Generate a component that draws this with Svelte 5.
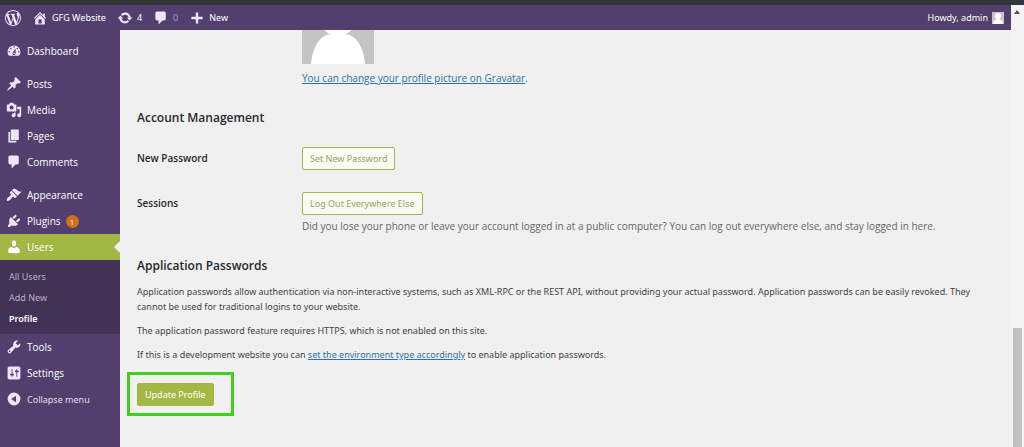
<script lang="ts">
  type MenuItem = { label: string; icon: string; current?: boolean; count?: number };

  const icons: Record<string, string> = {
    wordpress:
      'M20 10c0-5.51-4.49-10-10-10C4.48 0 0 4.49 0 10c0 5.52 4.48 10 10 10 5.51 0 10-4.48 10-10zM7.78 15.37L4.37 6.22c.55-.02 1.17-.08 1.17-.08.5-.06.44-1.13-.06-1.11 0 0-1.45.11-2.37.11-.18 0-.37 0-.58-.01C4.12 2.69 6.87 1.11 10 1.11c2.33 0 4.45.87 6.05 2.34-.68-.11-1.65.39-1.65 1.58 0 .74.45 1.36.9 2.1.35.61.55 1.36.55 2.46 0 1.49-1.4 5-1.4 5l-3.03-8.37c.54-.02.82-.17.82-.17.5-.05.44-1.25-.06-1.22 0 0-1.44.12-2.38.12-.87 0-2.33-.12-2.33-.12-.5-.03-.56 1.2-.06 1.22l.92.08 1.26 3.41zM17.41 10c.24-.64.74-1.87.43-4.25.7 1.29 1.05 2.71 1.05 4.25 0 3.29-1.73 6.24-4.4 7.78.97-2.59 1.94-5.2 2.92-7.78zM6.1 18.09C3.12 16.65 1.11 13.53 1.11 10c0-1.3.23-2.48.72-3.59C3.25 10.3 4.67 14.2 6.1 18.09zm4.03-6.63l2.58 6.98c-.86.29-1.76.45-2.71.45-.79 0-1.57-.11-2.29-.33.81-2.38 1.62-4.74 2.42-7.1z',
    home: 'M16 8.5l1.53 1.53-1.06 1.06L10 4.6l-6.47 6.49-1.06-1.06L10 2.5l4 4v-2h2v4zm-6-2.46l6 5.99V18H4v-5.97zM12 17v-5H8v5h4z',
    update:
      'M10.2 3.28c3.53 0 6.43 2.61 6.92 6h2.08l-3.5 4-3.5-4h2.32c-.45-1.97-2.21-3.45-4.32-3.45-1.45 0-2.73.71-3.54 1.78L4.95 5.66C6.23 4.2 8.11 3.28 10.2 3.28zm-.4 13.44c-3.52 0-6.43-2.61-6.92-6H.8l3.5-4c1.17 1.33 2.33 2.67 3.5 4H5.48c.45 1.97 2.21 3.45 4.32 3.45 1.45 0 2.73-.71 3.54-1.78l1.71 1.95c-1.28 1.46-3.15 2.38-5.25 2.38z',
    plus: 'M17 8.5v3h-5.5V17h-3v-5.5H3v-3h5.5V3h3v5.5z',
    dashboard:
      'M3.76 16h12.48c1.1-1.37 1.76-3.11 1.76-5 0-4.42-3.58-8-8-8s-8 3.58-8 8c0 1.89.66 3.63 1.76 5zM10 4c.55 0 1 .45 1 1s-.45 1-1 1-1-.45-1-1 .45-1 1-1zM6 6c.55 0 1 .45 1 1s-.45 1-1 1-1-.45-1-1 .45-1 1-1zm8 0c.55 0 1 .45 1 1s-.45 1-1 1-1-.45-1-1 .45-1 1-1zm-5.37 5.55L12 7v6c0 1.1-.9 2-2 2s-2-.9-2-2c0-.57.24-1.08.63-1.45zM4 10c.55 0 1 .45 1 1s-.45 1-1 1-1-.45-1-1 .45-1 1-1zm12 0c.55 0 1 .45 1 1s-.45 1-1 1-1-.45-1-1 .45-1 1-1zm-5 3c0-.55-.45-1-1-1s-1 .45-1 1 .45 1 1 1 1-.45 1-1z',
    post: 'M10.44 3.02l1.82-1.82 6.36 6.35-1.83 1.82c-1.05-.68-2.48-.57-3.41.36l-.75.75c-.92.93-1.04 2.35-.35 3.41l-1.83 1.82-2.41-2.41-2.8 2.79c-.42.42-3.38 2.71-3.8 2.29s1.86-3.39 2.28-3.81l2.79-2.79L4.1 9.36l1.83-1.82c1.05.69 2.48.57 3.4-.36l.75-.75c.93-.92 1.05-2.35.36-3.41z',
    media:
      'M13 11V4c0-.55-.45-1-1-1h-1.67L9 1H5L3.67 3H2c-.55 0-1 .45-1 1v7c0 .55.45 1 1 1h10c.55 0 1-.45 1-1zM7 4.5c1.38 0 2.5 1.12 2.5 2.5S8.38 9.5 7 9.5 4.5 8.38 4.5 7 5.62 4.5 7 4.5zM14 6h5v10.5c0 1.38-1.12 2.5-2.5 2.5S14 17.88 14 16.5s1.12-2.5 2.5-2.5c.17 0 .34.02.5.05V9h-3V6zm-4 8.05V13h2v3.5c0 1.38-1.12 2.5-2.5 2.5S7 17.88 7 16.5 8.12 14 9.5 14c.17 0 .34.02.5.05z',
    page: 'M6 15V2h10v13H6zm-1 1h8v2H3V5h2v11z',
    comment: 'M5 2h9c1.1 0 2 .9 2 2v7c0 1.1-.9 2-2 2h-2l-5 5v-5H5c-1.1 0-2-.9-2-2V4c0-1.1.9-2 2-2z',
    appearance:
      'M14.48 11.06L7.41 3.99l1.5-1.5c.5-.56 2.3-.47 3.51.32 1.21.8 1.43 1.28 2.91 2.1 1.18.64 2.45 1.26 4.45.85zm-.71.71L6.7 4.7 4.93 6.47c-.39.39-.39 1.02 0 1.41l1.06 1.06c.39.39.39 1.03 0 1.42-.6.6-1.43 1.11-2.21 1.69-.35.26-.7.53-1.01.84C1.43 14.23.4 16.08 1.4 17.07c.99 1 2.84-.03 4.18-1.36.31-.31.58-.66.85-1.02.57-.78 1.08-1.61 1.69-2.21.39-.39 1.02-.39 1.41 0l1.06 1.06c.39.39 1.02.39 1.41 0z',
    plugins:
      'M13.11 4.36L9.87 7.6 8 5.73l3.24-3.24c.35-.34 1.05-.2 1.56.32.52.51.66 1.21.31 1.55zm-8 1.77l.91-1.12 9.01 9.01-1.19.84c-.71.71-2.63 1.16-3.82 1.16H6.14L4.9 17.26c-.59.59-1.54.59-2.12 0-.59-.58-.59-1.53 0-2.12l1.24-1.24v-3.88c0-1.13.4-3.19 1.09-3.89zm7.26 3.97l3.24-3.24c.34-.35 1.04-.21 1.55.31.52.51.66 1.21.31 1.55l-3.24 3.25z',
    users:
      'M10 9.25c-2.27 0-2.73-3.44-2.73-3.44C7 4.02 7.82 2 9.97 2c2.16 0 2.98 2.02 2.71 3.81 0 0-.41 3.44-2.68 3.44zm0 2.57L12.72 10c2.39 0 4.52 2.33 4.52 4.53v2.49s-3.65 1.13-7.24 1.13c-3.65 0-7.24-1.13-7.24-1.13v-2.49c0-2.25 1.94-4.48 4.47-4.48z',
    tools:
      'M16.68 9.77c-1.34 1.34-3.3 1.67-4.95.99l-5.41 6.52c-.99.99-2.59.99-3.58 0s-.99-2.59 0-3.57l6.52-5.42c-.68-1.65-.35-3.61.99-4.95 1.28-1.28 3.12-1.62 4.72-1.06l-2.89 2.89 2.82 2.82 2.86-2.87c.53 1.58.18 3.39-1.08 4.65zM3.81 16.21c.4.39 1.04.39 1.43 0 .4-.4.4-1.04 0-1.43-.39-.4-1.03-.4-1.43 0-.39.39-.39 1.03 0 1.43z',
    settings:
      'M18 16V4c0-1.1-.9-2-2-2H4c-1.1 0-2 .9-2 2v12c0 1.1.9 2 2 2h12c1.1 0 2-.9 2-2zM8 11h1c.55 0 1 .45 1 1s-.45 1-1 1H8v1.5c0 .28-.22.5-.5.5s-.5-.22-.5-.5V13H6c-.55 0-1-.45-1-1s.45-1 1-1h1V5.5c0-.28.22-.5.5-.5s.5.22.5.5V11zm5-2h-1c-.55 0-1-.45-1-1s.45-1 1-1h1V5.5c0-.28.22-.5.5-.5s.5.22.5.5V7h1c.55 0 1 .45 1 1s-.45 1-1 1h-1v5.5c0 .28-.22.5-.5.5s-.5-.22-.5-.5V9z',
    collapse: 'M10 2a8 8 0 1 0 0 16a8 8 0 1 0 0-16zM12.5 6v8l-6-4z'
  };

  const groups: MenuItem[][] = [
    [{ label: 'Dashboard', icon: 'dashboard' }],
    [
      { label: 'Posts', icon: 'post' },
      { label: 'Media', icon: 'media' },
      { label: 'Pages', icon: 'page' },
      { label: 'Comments', icon: 'comment' }
    ],
    [
      { label: 'Appearance', icon: 'appearance' },
      { label: 'Plugins', icon: 'plugins', count: 1 },
      { label: 'Users', icon: 'users', current: true },
      { label: 'Tools', icon: 'tools' },
      { label: 'Settings', icon: 'settings' }
    ]
  ];
  const submenu = ['All Users', 'Add New', 'Profile'];
</script>

{#snippet icon(name: string)}
  <svg class="icon" viewBox="0 0 20 20" aria-hidden="true">
    <path fill-rule="evenodd" d={icons[name]} />
  </svg>
{/snippet}

<div class="screen">
  <div class="window-edge"></div>
  <div class="viewport">
    <div class="page">
      <header class="adminbar">
        <a href="#about" aria-label="About WordPress">{@render icon('wordpress')}</a>
        <a class="site" href="#site">{@render icon('home')}GFG Website</a>
        <a href="#updates">{@render icon('update')}4</a>
        <a class="replies" href="#comments">{@render icon('comment')}<span>0</span></a>
        <a href="#new">{@render icon('plus')}New</a>
        <a class="account" href="#account">
          Howdy, admin
          <svg class="face" viewBox="0 0 12 12" aria-hidden="true">
            <rect width="12" height="12" fill="#c8c4cc" />
            <circle cx="6" cy="4" r="3" />
            <ellipse cx="6" cy="12" rx="5" ry="5" />
          </svg>
        </a>
      </header>

      <div class="columns">
        <nav class="menu">
          {#each groups as group}
            <ul>
              {#each group as item}
                <li>
                  <a href="#{item.icon}" class="item" class:current={item.current}>
                    {@render icon(item.icon)}{item.label}
                    {#if item.count}<span class="count">{item.count}</span>{/if}
                  </a>
                  {#if item.current}
                    <ul class="submenu">
                      {#each submenu as label}
                        <li><a href="#users" class:active={label === 'Profile'}>{label}</a></li>
                      {/each}
                    </ul>
                  {/if}
                </li>
              {/each}
            </ul>
          {/each}
          <button type="button" class="item collapse">{@render icon('collapse')}Collapse menu</button>
        </nav>

        <main>
          <div class="picture">
            <svg class="avatar" viewBox="0 38 72 34" role="img" aria-label="Profile picture">
              <rect y="38" width="72" height="34" fill="#c4c4c4" />
              <circle cx="36" cy="26" r="18" fill="#fff" />
              <path d="M9 72C10 58 16 45 26 42.500H46C56 45 62 58 63 72z" fill="#fff" />
            </svg>
            <p class="description"><a href="#gravatar">You can change your profile picture on Gravatar</a>.</p>
          </div>

          <h2>Account Management</h2>
          <div class="rows">
            <div class="row">
              <h3>New Password</h3>
              <button type="button" class="button">Set New Password</button>
            </div>
            <div class="row">
              <h3>Sessions</h3>
              <div>
                <button type="button" class="button">Log Out Everywhere Else</button>
                <p class="description">
                  Did you lose your phone or leave your account logged in at a public computer? You can log out
                  everywhere else, and stay logged in here.
                </p>
              </div>
            </div>
          </div>

          <h2>Application Passwords</h2>
          <p>
            Application passwords allow authentication via non-interactive systems, such as XML-RPC or the REST API,
            without providing your actual password. Application passwords can be easily revoked. They cannot be used for
            traditional logins to your website.
          </p>
          <p>The application password feature requires HTTPS, which is not enabled on this site.</p>
          <p>
            If this is a development website you can <a href="#environment">set the environment type accordingly</a> to
            enable application passwords.
          </p>

          <div class="highlight"><button type="submit" class="button primary">Update Profile</button></div>
        </main>
      </div>
    </div>

    <div class="scrollbar" aria-hidden="true">
      <svg viewBox="0 0 13 12"><path d="M3 9l3-4 3 4z" /></svg>
      <div class="thumb"></div>
    </div>
  </div>
</div>

<style>
  :global(body) {
    margin: 0;
    background: #f0f0f0;
  }

  .screen {
    display: flex;
    flex-direction: column;
    height: 100vh;
    overflow: hidden;
    font: 9px/15px 'Noto Sans', 'Open Sans', sans-serif;
    color: #3f4347;
  }

  .window-edge {
    flex: none;
    height: 5px;
    background: #333438;
  }

  .viewport {
    display: flex;
    flex: 1;
    min-height: 0;
  }

  .page {
    display: flex;
    flex: 1;
    flex-direction: column;
    min-width: 0;
  }

  .icon {
    flex: none;
    width: 16px;
    height: 16px;
    fill: #efe6fb;
  }

  .adminbar {
    display: flex;
    flex: none;
    align-items: center;
    gap: 11px;
    height: 25px;
    padding: 0 7px 0 5px;
    background: #523f6d;
  }

  .adminbar a {
    display: flex;
    align-items: center;
    gap: 4px;
    color: #fff;
    text-decoration: none;
  }

  .replies span {
    color: #a99bbd;
  }

  .adminbar .account {
    margin-left: auto;
  }

  .face {
    width: 12px;
    height: 12px;
    fill: #fff;
  }

  .columns {
    display: flex;
    flex: 1;
    min-height: 0;
  }

  .menu {
    flex: none;
    width: 120px;
    padding-top: 8px;
    background: #523f6d;
  }

  ul {
    margin: 0;
    padding: 0;
    list-style: none;
  }

  .menu > ul + ul {
    margin-top: 7px;
  }

  .item {
    position: relative;
    display: flex;
    align-items: center;
    gap: 5px;
    width: 100%;
    height: 26px;
    padding: 0 6px;
    box-sizing: border-box;
    border: 0;
    background: none;
    color: #fff;
    font: 10px 'Open Sans', 'Noto Sans', sans-serif;
    text-decoration: none;
  }

  .item.current {
    background: #a3b745;
  }

  /* arrow pointing from the content area into the current item */
  .item.current::after {
    content: '';
    position: absolute;
    right: 0;
    border: 6px solid transparent;
    border-right-color: #f0f0f0;
    border-left-width: 0;
  }

  .item.current .icon {
    fill: #fff;
  }

  .item.collapse {
    color: #e2dcec;
    font: inherit;
  }

  .count {
    width: 13px;
    height: 13px;
    border-radius: 50%;
    background: #d46f15;
    font-size: 8px;
    line-height: 13px;
    text-align: center;
  }

  .submenu {
    padding: 6px 9px 5px;
    background: #413256;
    line-height: 21px;
  }

  .submenu a {
    display: block;
    color: #b9afc6;
    text-decoration: none;
  }

  .submenu a.active {
    color: #fff;
    font-weight: 600;
  }

  main {
    flex: 1;
    min-width: 0;
    padding: 0 20px 0 17px;
  }

  h2,
  h3,
  p {
    margin: 0;
  }

  h2 {
    margin: 22px 0 8px;
    color: #25282b;
    font: 600 12px/20px 'Open Sans', 'Noto Sans', sans-serif;
  }

  h3 {
    width: 165px;
    color: #25282b;
    font: 600 10px/22px 'Open Sans', 'Noto Sans', sans-serif;
  }

  p {
    margin-bottom: 9px;
  }

  main a {
    color: #2a72a3;
  }

  .rows {
    display: flex;
    flex-direction: column;
    gap: 22px;
    padding-top: 11px;
  }

  .row {
    display: flex;
  }

  .picture {
    margin-left: 165px;
  }

  .avatar {
    display: block;
    width: 72px;
    height: 34px;
    margin-bottom: 7px;
  }

  .button {
    display: block;
    height: 23px;
    padding: 0 7px;
    border: 1px solid #a3b745;
    border-radius: 2px;
    background: #f9faf3;
    color: #98a65c;
    font: inherit;
  }

  .description {
    margin: 0;
    color: #63666a;
    font: 10px/15px 'Open Sans', 'Noto Sans', sans-serif;
  }

  .button + .description {
    margin-top: 4px;
  }

  .button.primary {
    background: #a3b745;
    color: #fff;
  }

  .highlight {
    width: fit-content;
    margin: 10px 0 0 -10px;
    padding: 8px 17px 7px 7px;
    border: 3px solid #3fd01c;
  }

  .scrollbar {
    display: flex;
    flex: none;
    flex-direction: column;
    justify-content: space-between;
    align-items: center;
    width: 13px;
    background: #f3f3f3;
  }

  .scrollbar svg {
    width: 13px;
    height: 12px;
    fill: #505050;
  }

  .thumb {
    width: 9px;
    height: 27%;
    background: #c1c1c1;
  }
</style>
